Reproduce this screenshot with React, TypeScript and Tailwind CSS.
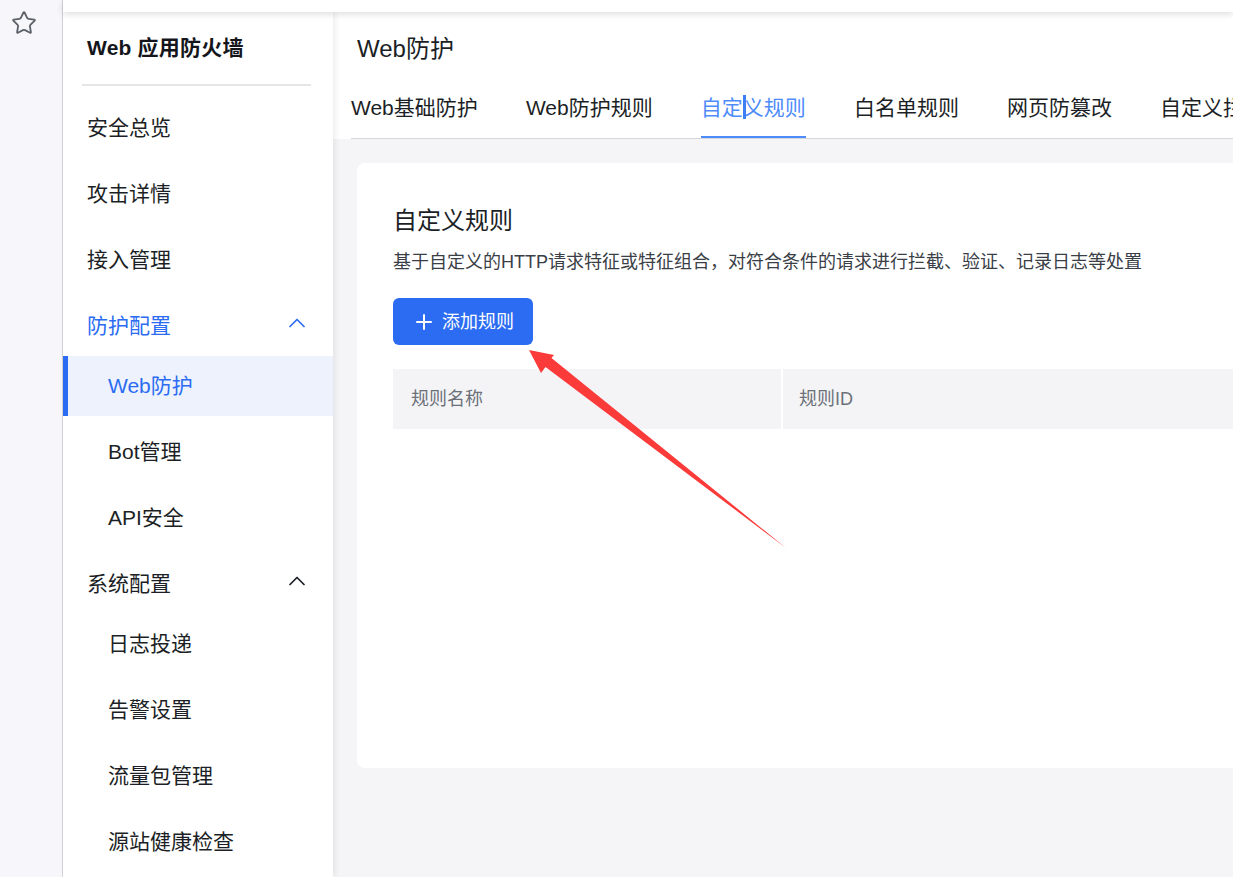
import { Star, ChevronUp, Plus } from "lucide-react";

const font = "font-['Liberation_Sans','Noto_Sans_CJK_SC',sans-serif]";

function NavItem({ label, sub, active, open, blue, mt }: { label: string; sub?: boolean; active?: boolean; open?: boolean; blue?: boolean; mt?: boolean }) {
  const pad = active ? "pl-[40px] border-l-[5px] border-[#2b6cf2] bg-[#edf2fd] text-[#2b6cf2]" : sub ? "pl-[45px] text-[#1c1f26]" : blue ? "pl-[24px] text-[#2b6cf2]" : "pl-[24px] text-[#1c1f26]";
  return (
    <div className={`flex h-[60px] items-center justify-between pr-[22px] text-[21px] ${pad} ${mt ? "mt-[6px]" : ""}`}>
      <span>{label}</span>
      {open && <ChevronUp size={28} strokeWidth={1.5} className="-translate-y-[3px]" />}
    </div>
  );
}

function Tab({ label, active }: { label: string; active?: boolean }) {
  return (
    <div className={`h-[46px] shrink-0 whitespace-nowrap pt-[2px] text-[21px] leading-[28px] ${active ? "relative border-b-[2px] border-[#4f8cfb] text-[#4f8cfb]" : "text-[#1c1f26]"}`}>
      {label}
      {active && <span className="absolute left-[42px] top-[3px] h-[24px] w-[3px] bg-[#3f7ff5]" />}
    </div>
  );
}

export default function App() {
  return (
    <div className={`relative flex h-[877px] w-[1233px] overflow-hidden bg-[#f7f7fb] ${font}`}>
      <aside className="w-[63px] shrink-0 border-r border-[#d4d5d9] pl-[11px] pt-[10px]">
        <Star size={26} strokeWidth={1.7} className="text-[#5d6169]" />
      </aside>
      <div className="flex min-w-0 flex-1 flex-col">
        <div className="relative z-20 h-[12px] shrink-0 bg-white shadow-[0_2px_7px_rgba(0,0,0,0.14)]" />
        <div className="flex min-h-0 flex-1">
          <nav className="relative z-10 w-[270px] shrink-0 bg-white shadow-[2px_0_6px_rgba(0,0,0,0.08)]">
            <div className="ml-[19px] mr-[22px] flex h-[74px] items-center border-b-[2px] border-[#e6e6e8] pl-[5px] text-[21px] font-bold tracking-[0.2px] text-[#14161b]">
              Web 应用防火墙
            </div>
            <div className="pt-[12px]">
              <NavItem label="安全总览" />
              <NavItem label="攻击详情" mt />
              <NavItem label="接入管理" mt />
              <NavItem label="防护配置" mt open blue />
              <NavItem label="Web防护" sub active />
              <NavItem label="Bot管理" sub mt />
              <NavItem label="API安全" sub mt />
              <NavItem label="系统配置" mt open />
              <NavItem label="日志投递" sub />
              <NavItem label="告警设置" sub mt />
              <NavItem label="流量包管理" sub mt />
              <NavItem label="源站健康检查" sub mt />
            </div>
          </nav>
          <main className="min-w-0 flex-1 overflow-hidden bg-[#f5f5f8]">
            <header className="h-[127px] bg-white pl-[18px]">
              <h1 className="pl-[6px] pt-[22px] text-[24px] leading-[30px] font-normal text-[#1c1f26]">Web防护</h1>
              <div className="mt-[28px] flex gap-[48.1px] overflow-hidden border-b border-[#d6d7da]">
                <Tab label="Web基础防护" />
                <Tab label="Web防护规则" />
                <Tab label="自定义规则" active />
                <Tab label="白名单规则" />
                <Tab label="网页防篡改" />
                <Tab label="自定义拦截" />
              </div>
            </header>
            <section className="ml-[24px] mt-[24px] h-[605px] w-[1000px] rounded-l-[8px] bg-white pl-[36px] pt-[43px]">
              <h2 className="text-[24px] leading-[30px] font-normal text-[#1c1f26]">自定义规则</h2>
              <p className="mt-[14px] text-[18px] leading-[24px] text-[#3a3e46]">基于自定义的HTTP请求特征或特征组合，对符合条件的请求进行拦截、验证、记录日志等处置</p>
              <button className="mt-[24px] flex h-[47px] w-[140px] items-center justify-center gap-[6px] rounded-[6px] bg-[#2b6cf2] pt-[1px] text-[18px] text-white">
                <Plus size={24} strokeWidth={2} />
                添加规则
              </button>
              <div className="mt-[24px] flex h-[60px] text-[18px] text-[#6c7078]">
                <div className="flex w-[388px] items-center bg-[#f4f4f7] pl-[18px]">规则名称</div>
                <div className="ml-[2px] flex flex-1 items-center bg-[#f4f4f7] pl-[16px]">规则ID</div>
              </div>
            </section>
          </main>
        </div>
      </div>
      <svg className="pointer-events-none absolute left-0 top-0 z-30" width="1233" height="877" viewBox="0 0 1233 877">
        <polygon points="529,350 554,355 551.5,358 786,548 545.5,367 541,373" fill="#fb3a3a" />
      </svg>
    </div>
  );
}
